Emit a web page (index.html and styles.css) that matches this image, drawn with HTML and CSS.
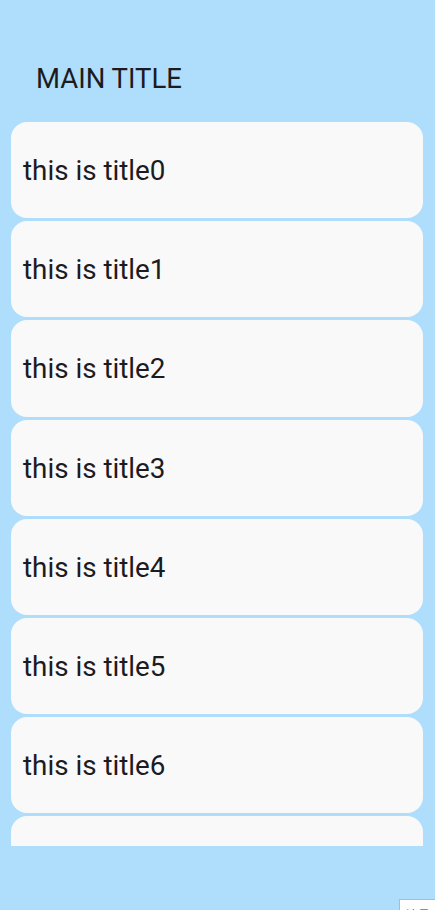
FILE: index.html
```html
<!DOCTYPE html>
<html lang="en">
<head>
<meta charset="utf-8">
<title>Main Title</title>
<link rel="stylesheet" href="styles.css">
</head>
<body>
<div class="page">
  <header class="header">MAIN TITLE</header>
  <div class="list">
    <div class="card">this is title0</div>
    <div class="card">this is title1</div>
    <div class="card">this is title2</div>
    <div class="card">this is title3</div>
    <div class="card">this is title4</div>
    <div class="card">this is title5</div>
    <div class="card">this is title6</div>
    <div class="card"></div>
  </div>
</div>
<div class="badge">流量</div>
</body>
</html>
```

FILE: styles.css
```css
html, body {
  margin: 0;
  padding: 0;
  height: 100%;
}
body {
  background: #afdefc;
  font-family: Roboto, "Noto Sans CJK SC", sans-serif;
  color: #1c1b1f;
  overflow: hidden;
}
.page {
  display: flex;
  flex-direction: column;
}
.header {
  padding: 62px 0 0 36px;
  font-size: 27.5px;
  line-height: 33px;
  height: 33px;
  margin-bottom: 27px;
}
.list {
  margin: 0 12px 0 11px;
  height: 724px;
  overflow: hidden;
  display: flex;
  flex-direction: column;
  gap: 3px;
}
.card {
  flex: 0 0 96.2px;
  box-sizing: border-box;
  background: #f9f9f9;
  border-radius: 16px;
  display: flex;
  align-items: center;
  padding: 2px 0 0 12px;
  font-size: 27.8px;
  line-height: 32px;
}
.badge {
  position: fixed;
  left: 399px;
  top: 899px;
  width: 40px;
  height: 24px;
  background: #fff;
  border: 1px solid #b8b8b8;
  box-sizing: border-box;
  font-size: 12px;
  line-height: 14px;
  padding: 9px 0 0 6px;
  color: #333;
}
```
